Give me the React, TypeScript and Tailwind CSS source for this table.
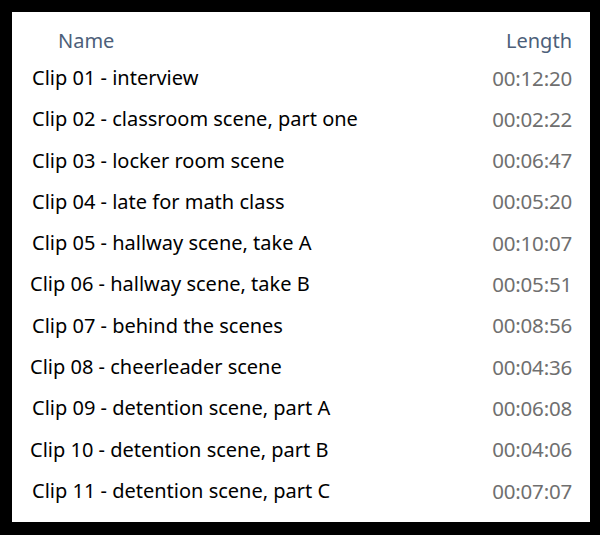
const ROWS = [
  { title: "Clip 01 - interview", length: "00:12:20", indent: false },
  { title: "Clip 02 - classroom scene, part one", length: "00:02:22", indent: false },
  { title: "Clip 03 - locker room scene", length: "00:06:47", indent: false },
  { title: "Clip 04 - late for math class", length: "00:05:20", indent: false },
  { title: "Clip 05 - hallway scene, take A", length: "00:10:07", indent: false },
  { title: "Clip 06 - hallway scene, take B", length: "00:05:51", indent: true },
  { title: "Clip 07 - behind the scenes", length: "00:08:56", indent: false },
  { title: "Clip 08 - cheerleader scene", length: "00:04:36", indent: true },
  { title: "Clip 09 - detention scene, part A", length: "00:06:08", indent: false },
  { title: "Clip 10 - detention scene, part B", length: "00:04:06", indent: true },
  { title: "Clip 11 - detention scene, part C", length: "00:07:07", indent: false },
];

export default function App() {
  return (
    <div className="w-[600px] h-[535px] bg-black p-3 font-['Noto_Sans',sans-serif]">
      <div className="w-[578px] h-[510px] bg-white pr-[18px] pl-[20px] pt-[12.6px]">
        <div className="flex items-center justify-between h-[32.7px] pl-[26px] text-[#4d5f7a] text-[20px]">
          <span>Name</span>
          <span>Length</span>
        </div>
        <div className="flex flex-col">
          {ROWS.map((row) => (
            <div key={row.length + row.title} className="flex items-center justify-between h-[41.3px]">
              <span className={`text-[20px] text-black ${row.indent ? "-ml-[2px]" : ""}`}>{row.title}</span>
              <span className="text-[20.5px] text-[#6f6f6f] tracking-[-0.2px]">{row.length}</span>
            </div>
          ))}
        </div>
      </div>
    </div>
  );
}
